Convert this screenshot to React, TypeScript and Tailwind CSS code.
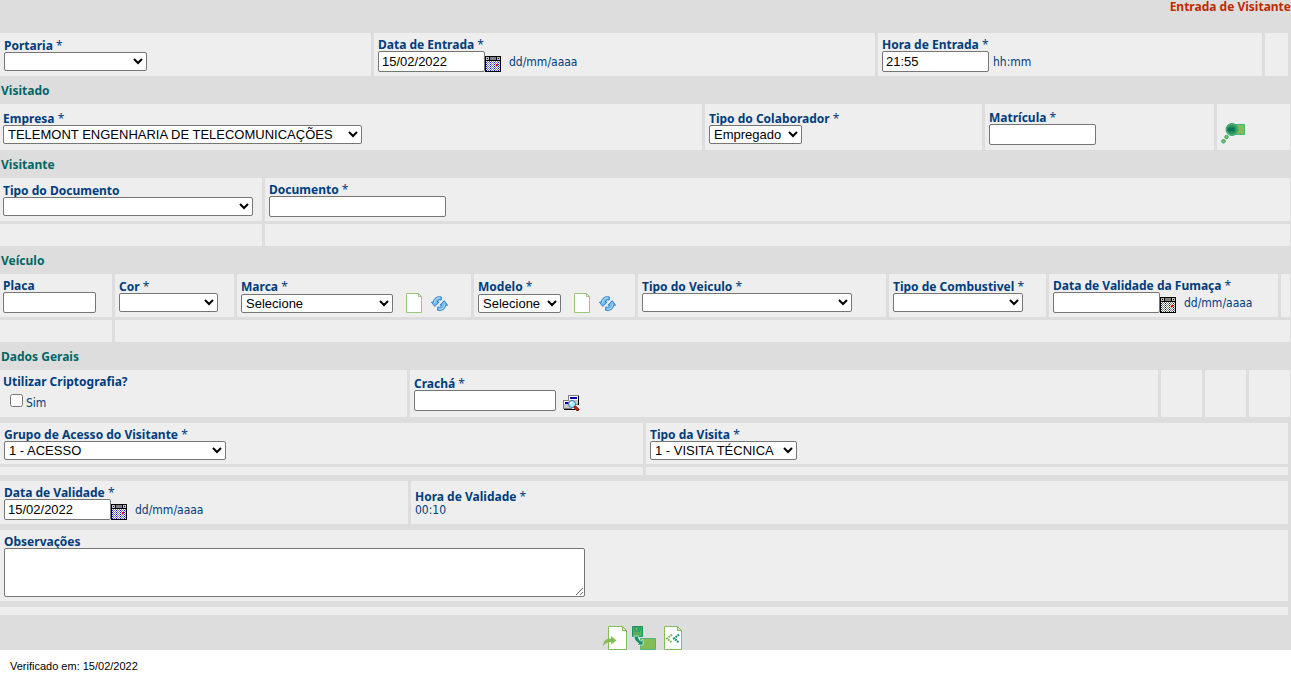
import { useId, type ReactNode } from "react";

const boldFont = "font-['Noto_Sans',sans-serif] text-[12px] leading-4 font-bold";
const labelFont = `-mb-0.5 ${boldFont} text-[#003d7c]`;
const hintFont = "font-['DejaVu_Sans_Condensed','DejaVu_Sans',sans-serif] text-[12px] leading-[14px] text-[#003d7c]";
const control =
  "rounded-[2px] border border-[#767676] bg-white font-['Liberation_Sans',Arial,sans-serif] text-[13px] leading-[17px] text-black";

function Row({ cols, inset, className = "", children }: { cols: string; inset?: boolean; className?: string; children: ReactNode }) {
  return (
    <div className={`grid gap-[3px] ${inset ? "pr-[3px]" : "pr-px *:first:pl-[3px]"} ${cols} ${className}`}>{children}</div>
  );
}

function Cell({ children, className = "" }: { children?: ReactNode; className?: string }) {
  return <div className={`flex min-w-0 flex-col justify-center bg-[#eeeeee] pl-1 ${className}`}>{children}</div>;
}

function Label({ id, children, required }: { id?: string; children: ReactNode; required?: boolean }) {
  return (
    <label htmlFor={id} className={`block whitespace-nowrap ${labelFont}`}>
      {children}
      {required && <span className="font-normal"> *</span>}
    </label>
  );
}

function TextField({
  label, required, width, value, children,
}: { label: string; required?: boolean; width: string; value?: string; children?: ReactNode }) {
  const id = useId();
  return (
    <>
      <Label id={id} required={required}>{label}</Label>
      <div className="flex items-center">
        <input id={id} type="text" defaultValue={value} className={`h-[21px] px-[3px] ${control} ${width}`} />
        {children}
      </div>
    </>
  );
}

function SelectField({
  label, required, width, option = "", children,
}: { label: string; required?: boolean; width: string; option?: string; children?: ReactNode }) {
  const id = useId();
  return (
    <>
      <Label id={id} required={required}>{label}</Label>
      <div className="flex items-end">
        <select id={id} className={`h-[19px] ${control} ${width}`}>
          <option>{option}</option>
        </select>
        {children}
      </div>
    </>
  );
}

function DateField({ label, value }: { label: string; value?: string }) {
  return (
    <TextField label={label} required width="w-[107px]" value={value}>
      <button type="button" aria-label="Abrir calendário" className="self-end">
        <CalendarIcon />
      </button>
      <span className={`ml-2 ${hintFont}`}>dd/mm/aaaa</span>
    </TextField>
  );
}

function Section({ children }: { children: ReactNode }) {
  return <h2 className={`flex h-7 items-center pt-0.5 pl-px ${boldFont} text-[#006666]`}>{children}</h2>;
}

function CalendarIcon() {
  const gridRows = [6, 8, 10, 12, 14];
  return (
    <svg width="16" height="16" viewBox="0 0 16 16" shapeRendering="crispEdges" className="block">
      <path fill="#000" d="M0 0h16v16H0z" />
      <path fill="#fff" d="M1 5h14v10H1z" />
      <path fill="#c0c0c0" d="M1 1h3v3H1zM12 1h3v3h-3z" />
      <path fill="#000" d="M2 2h1v1H2zM13 2h1v1h-1z" />
      <path fill="#808080" d="M5 1h6v3H5z" />
      {gridRows.map((y) => (
        <g key={y}>
          <path stroke="#808080" strokeDasharray="1 1" d={`M2 ${y - 1}.5h13`} />
          <path stroke="#808080" strokeDasharray="1 3" d={`M3 ${y}.5h12`} />
          <path stroke="#0000e0" strokeDasharray="1 3" d={`M1 ${y}.5h14`} />
        </g>
      ))}
      <path fill="#f00" d="M11 8h2v2h-2z" />
      <path fill="#ffb000" d="M10 9h1v1h-1z" />
    </svg>
  );
}

function PageIcon() {
  return (
    <svg width="17" height="20" viewBox="0 0 17 20" className="block">
      <path d="M.5.5h12l3 3v16H.5z" fill="#fff" stroke="#9aca78" />
      <path d="M12.5.5v3h3z" fill="#d5eac8" stroke="#9aca78" />
    </svg>
  );
}

function RefreshIcon() {
  return (
    <svg width="17" height="17" viewBox="0 0 17 17" className="block">
      <path d="M10.500 1C6.500-.2 2.800 2 2.300 6H.4l3.400 4.600L8.200 6H6.300c.3-1.700 2-2.500 4-1.900z" fill="#6cb9f2" stroke="#2a74bd" strokeWidth=".8" />
      <path d="M6.500 14.200c4 1.200 7.700-1 8.200-5h1.900l-3.400-4.600-4.400 4.600h1.900c-.3 1.700-2 2.500-4 1.900z" fill="#6cb9f2" stroke="#2a74bd" strokeWidth=".8" />
      <path d="M9 2C5.800 1.600 3.800 3.600 3.600 7M8 13.200c3.200.4 5.200-1.600 5.400-5" fill="none" stroke="#c3e3fa" strokeWidth=".9" />
    </svg>
  );
}

function FieldActions({ subject }: { subject: string }) {
  return (
    <div className="ml-[13px] flex items-end gap-2">
      <button type="button" aria-label={`Incluir ${subject}`}><PageIcon /></button>
      <button type="button" aria-label={`Atualizar ${subject}`}><RefreshIcon /></button>
    </div>
  );
}

function LookupIcon() {
  return (
    <svg width="17" height="16" viewBox="0 0 17 16" shapeRendering="crispEdges" className="block">
      <path fill="#808080" d="M5 0h11v10H5zM0 5h9v9H0z" />
      <path fill="#fff" d="M6 1h9v8H6zM1 6h8v7H1z" />
      <path fill="#c8c8c8" d="M6 5h9v4H6zM1 9h6v4H1z" />
      <path fill="#0000b0" d="M7 2h7v2H7zM2 7h4v2H2z" />
      <path fill="#000" d="M15 1h1v9h-1zM1 14h11v1H1z" />
      <circle cx="9" cy="9" r="3.500" fill="#a8f0ff" stroke="#4878a0" shapeRendering="auto" />
      <path fill="#fff" d="M7 7h2v2H7z" />
      <path d="M11.500 11.500l4 4" stroke="#000" strokeWidth="3" shapeRendering="auto" />
      <path d="M11.500 11.500l3.500 3.500" stroke="#f01800" strokeWidth="2" shapeRendering="auto" />
    </svg>
  );
}

function CameraIcon() {
  return (
    <svg width="25" height="22" viewBox="0 0 25 22" className="block">
      <path d="M11 2.500h12.500v10H11z" fill="#82bd55" stroke="#4fb281" />
      <circle cx="11" cy="7.500" r="6" fill="#4fae66" stroke="#35a672" />
      <circle cx="11" cy="7.500" r="4.500" fill="#28955f" />
      <path d="M6.500 5.500h7v4h-7z" fill="#0a7358" />
      <circle cx="5.500" cy="15" r="1.700" fill="#82bd55" stroke="#35a672" />
      <circle cx="2.500" cy="19.300" r="1.800" fill="#82bd55" stroke="#35a672" />
    </svg>
  );
}

function BackIcon() {
  return (
    <svg width="24" height="24" viewBox="0 0 24 24" className="block">
      <path d="M5.500.5h14l4 4v19h-18z" fill="#fff" stroke="#82bd55" />
      <path d="M19.500.5v4h4z" fill="#d5eac8" stroke="#82bd55" />
      <path d="M0 20c.2-5 3-7.500 8-7.500V10l5.500 4.500L8 18.500V16C4.500 16 2 17.300 0 20z" fill="#82bd55" />
    </svg>
  );
}

function SaveIcon() {
  return (
    <svg width="24" height="24" viewBox="0 0 24 24" className="block">
      <path d="M.5.5h10v10H.5z" fill="#5cad5b" stroke="#109468" />
      <path d="M3 1h5v4H3z" fill="#82bd55" stroke="#109468" />
      <path d="M5.500 2h1.500v2H5.500z" fill="#109468" />
      <path d="M8.500 12.500h15v11h-15z" fill="#82bd55" stroke="#4fb281" />
      <path d="M2 10h4.500c0 2.500.8 4 2.300 5.300l2.200-2v5.700H5l1.700-1.700C3.500 15.500 2.200 13.500 2 10z" fill="#109468" stroke="#fff" strokeWidth=".6" />
    </svg>
  );
}

function ClearIcon() {
  return (
    <svg width="24" height="24" viewBox="0 0 24 24" className="block">
      <path d="M3.500.5h13l4 4v19h-17z" fill="#fff" stroke="#82bd55" />
      <path d="M16.500.5v4h4z" fill="#d5eac8" stroke="#82bd55" />
      <path d="M11 8.500L6 12.500l5 4" fill="none" stroke="#82bd55" strokeWidth="2" strokeDasharray="1.800 .8" />
      <path d="M18 8.500l-5 4 5 4" fill="none" stroke="#109468" strokeWidth="2" strokeDasharray="1.800 .8" />
    </svg>
  );
}

export default function App() {
  return (
    <main className="min-h-screen bg-white">
      <form className="bg-[#dddddd]">
        <header className="flex h-[33px] justify-end">
          <h1 className="font-['Noto_Sans',sans-serif] text-[12px] leading-[14px] font-bold text-[#bf2a00]">Entrada de Visitante</h1>
        </header>

        <Row inset cols="grid-cols-[371fr_501fr_384fr_23fr]" className="min-h-[43px]">
          <Cell><SelectField label="Portaria" required width="w-[143px]" /></Cell>
          <Cell><DateField label="Data de Entrada" value="15/02/2022" /></Cell>
          <Cell>
            <TextField label="Hora de Entrada" required width="w-[107px]" value="21:55">
              <span className={`ml-1 ${hintFont}`}>hh:mm</span>
            </TextField>
          </Cell>
          <Cell />
        </Row>

        <Section>Visitado</Section>
        <Row cols="grid-cols-[702fr_277fr_229fr_73fr]" className="min-h-[46px]">
          <Cell><SelectField label="Empresa" required width="w-[359px]" option="TELEMONT ENGENHARIA DE TELECOMUNICAÇÕES" /></Cell>
          <Cell><SelectField label="Tipo do Colaborador" required width="w-[93px]" option="Empregado" /></Cell>
          <Cell><TextField label="Matrícula" required width="w-[107px]" /></Cell>
          <Cell className="items-start pt-3">
            <button type="button" aria-label="Capturar foto"><CameraIcon /></button>
          </Cell>
        </Row>

        <Section>Visitante</Section>
        <Row cols="grid-cols-[262fr_1025fr]" className="min-h-[43px]">
          <Cell><SelectField label="Tipo do Documento" width="w-[250px]" /></Cell>
          <Cell><TextField label="Documento" required width="w-[177px]" /></Cell>
        </Row>
        <Row cols="grid-cols-[262fr_1025fr]" className="mt-[3px] min-h-[22px]">
          <Cell />
          <Cell />
        </Row>

        <Section>Veículo</Section>
        <Row cols="grid-cols-[112fr_119fr_234fr_161fr_248fr_157fr_229fr_9fr]" className="min-h-[43px]">
          <Cell><TextField label="Placa" width="w-[93px]" /></Cell>
          <Cell><SelectField label="Cor" required width="w-[99px]" /></Cell>
          <Cell>
            <SelectField label="Marca" required width="w-[152px]" option="Selecione"><FieldActions subject="marca" /></SelectField>
          </Cell>
          <Cell>
            <SelectField label="Modelo" required width="w-[83px]" option="Selecione"><FieldActions subject="modelo" /></SelectField>
          </Cell>
          <Cell><SelectField label="Tipo do Veiculo" required width="w-[210px]" /></Cell>
          <Cell><SelectField label="Tipo de Combustivel" required width="w-[130px]" /></Cell>
          <Cell><DateField label="Data de Validade da Fumaça" /></Cell>
          <Cell />
        </Row>
        <Row cols="grid-cols-[112fr_1175fr]" className="mt-[3px] min-h-[22px]">
          <Cell />
          <Cell />
        </Row>

        <Section>Dados Gerais</Section>
        <Row cols="grid-cols-[407fr_748fr_41fr_41fr_41fr]" className="min-h-[47px]">
          <Cell>
            <fieldset className="pb-1">
              <legend className={labelFont}>Utilizar Criptografia?</legend>
              <label className={`mt-1.5 ml-[7px] flex h-4 w-fit items-end gap-[3px] ${hintFont}`}>
                <input type="checkbox" className="size-[13px] self-start" />
                Sim
              </label>
            </fieldset>
          </Cell>
          <Cell>
            <TextField label="Crachá" required width="w-[142px]">
              <button type="button" aria-label="Pesquisar crachá" className="ml-[7px] self-end"><LookupIcon /></button>
            </TextField>
          </Cell>
          <Cell />
          <Cell />
          <Cell />
        </Row>

        <Row inset cols="grid-cols-[643fr_642fr]" className="mt-[6px] min-h-[41px]">
          <Cell><SelectField label="Grupo de Acesso do Visitante" required width="w-[222px]" option="1 - ACESSO" /></Cell>
          <Cell><SelectField label="Tipo da Visita" required width="w-[147px]" option="1 - VISITA TÉCNICA" /></Cell>
        </Row>
        <Row inset cols="grid-cols-[643fr_642fr]" className="mt-[3px] min-h-2">
          <Cell />
          <Cell />
        </Row>

        <Row inset cols="grid-cols-[408fr_877fr]" className="mt-[6px] min-h-[43px]">
          <Cell><DateField label="Data de Validade" value="15/02/2022" /></Cell>
          <Cell>
            <div className={labelFont}>Hora de Validade<span className="font-normal"> *</span></div>
            <div className={hintFont}>00:10</div>
          </Cell>
        </Row>

        <Row inset cols="grid-cols-1" className="mt-[6px] min-h-[71px]">
          <Cell>
            <Label id="observacoes">Observações</Label>
            <textarea id="observacoes" className={`block h-[49px] w-[581px] max-w-full ${control}`} />
          </Cell>
        </Row>
        <Row inset cols="grid-cols-1" className="mt-[6px] min-h-2">
          <Cell />
        </Row>

        <div className="flex h-[35px] items-end justify-center gap-[5px] pr-1">
          <button type="button" aria-label="Voltar"><BackIcon /></button>
          <button type="submit" aria-label="Salvar"><SaveIcon /></button>
          <button type="reset" aria-label="Limpar"><ClearIcon /></button>
        </div>
      </form>

      <footer className="px-[10px] pt-2 font-['Liberation_Sans',Arial,sans-serif] text-[11px] leading-4 text-black">
        Verificado em: 15/02/2022
      </footer>
    </main>
  );
}
